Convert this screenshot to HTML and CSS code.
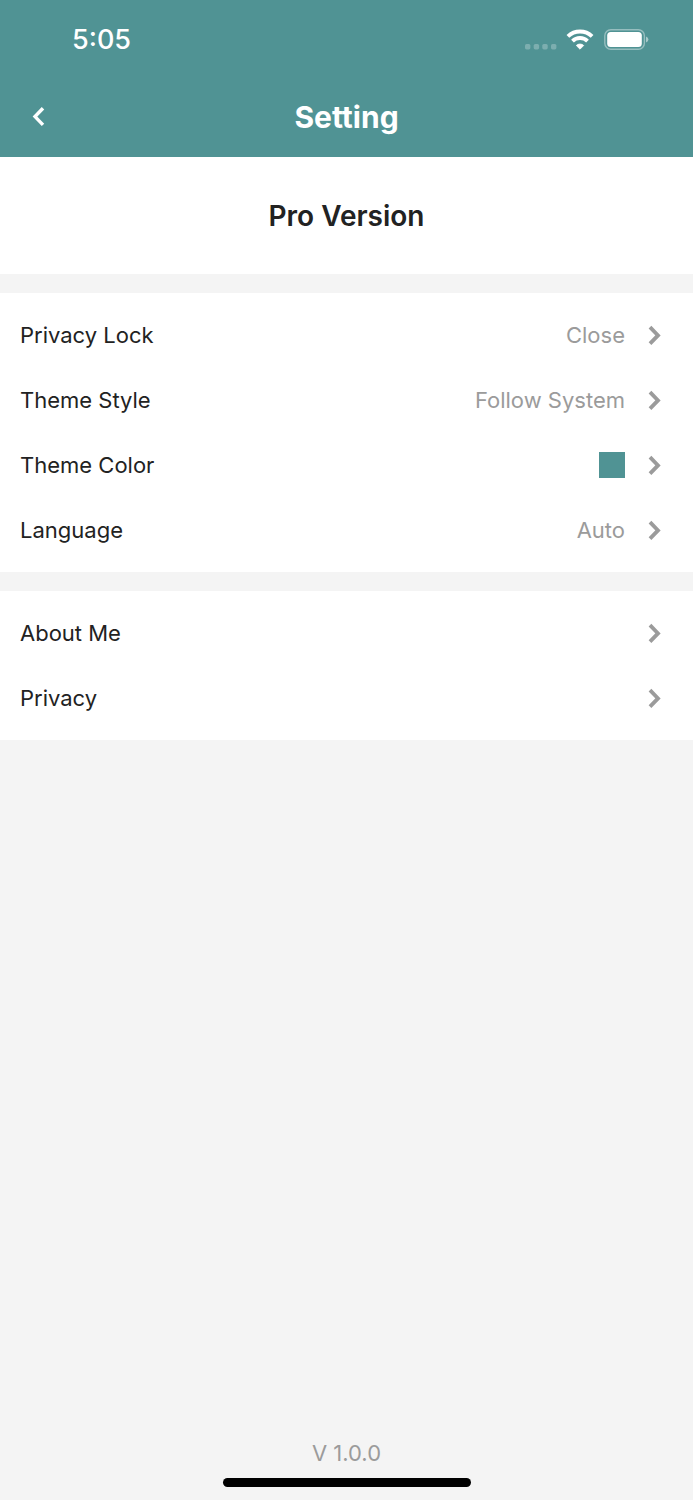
FILE: index.html
```html
<!DOCTYPE html>
<html lang="en">
<head>
    <meta charset="UTF-8">
    <meta name="viewport" content="width=device-width, initial-scale=1.0">
    <title>Setting</title>
    <link rel="stylesheet" href="styles.css">
</head>
<body>

    <!-- Shared chevron used by every row -->
    <svg class="symbols" aria-hidden="true">
        <symbol id="chevron" viewBox="0 0 14 20">
            <path d="M2 2.2 L10 10.4 L2 18.6" fill="none" stroke="currentColor" stroke-width="3.8"/>
        </symbol>
    </svg>

    <header class="header">
        <div class="status-bar">
            <span class="time">5:05</span>
            <div class="status-icons">
                <svg class="signal" width="32" height="22" viewBox="0 0 32 22" aria-hidden="true">
                    <g fill="#fff" opacity="0.25">
                        <rect x="0" y="15" width="5.4" height="5.4" rx="1.6"/>
                        <rect x="8.7" y="15" width="5.4" height="5.4" rx="1.6"/>
                        <rect x="17.3" y="15" width="5.4" height="5.4" rx="1.6"/>
                        <rect x="26" y="15" width="5.4" height="5.4" rx="1.6"/>
                    </g>
                </svg>
                <svg class="wifi" width="28" height="22" viewBox="0 0 28 22" aria-hidden="true">
                    <g fill="none" stroke="#fff" stroke-width="3.9">
                        <path d="M1.9 7.3 A17.6 17.6 0 0 1 26.1 7.3"/>
                        <path d="M6.5 12.1 A10.8 10.8 0 0 1 21.5 12.1"/>
                    </g>
                    <path d="M14 20.2 L10.3 16.5 A5.4 5.4 0 0 1 17.7 16.5 Z" fill="#fff" stroke="#fff" stroke-width="0.8" stroke-linejoin="round"/>
                </svg>
                <svg class="battery" width="45" height="22" viewBox="0 0 45 22" aria-hidden="true">
                    <rect x="0.8" y="0.7" width="39.6" height="19.6" rx="6" fill="none" stroke="#fff" stroke-width="1.4" opacity="0.4"/>
                    <rect x="3.2" y="3" width="34.6" height="15" rx="3.5" fill="#fff"/>
                    <path d="M42 7.5 Q44.4 8.5 44.4 10.5 Q44.4 12.5 42 13.5 Z" fill="#fff" opacity="0.5"/>
                </svg>
            </div>
        </div>
        <div class="nav-bar">
            <button type="button" class="back" aria-label="Back">
                <svg width="14" height="20" viewBox="0 0 14 20" aria-hidden="true">
                    <path d="M11 1.3 L3 9.6 L11 17.9" fill="none" stroke="currentColor" stroke-width="3.4"/>
                </svg>
            </button>
            <h1>Setting</h1>
        </div>
    </header>

    <main>
        <a class="pro" href="#pro">Pro Version</a>

        <nav class="group">
            <a class="row" href="#privacy-lock">
                <span class="label">Privacy Lock</span>
                <span class="value">Close</span>
                <svg class="chevron"><use href="#chevron"/></svg>
            </a>
            <a class="row" href="#theme-style">
                <span class="label">Theme Style</span>
                <span class="value">Follow System</span>
                <svg class="chevron"><use href="#chevron"/></svg>
            </a>
            <a class="row" href="#theme-color">
                <span class="label">Theme Color</span>
                <span class="swatch"></span>
                <svg class="chevron"><use href="#chevron"/></svg>
            </a>
            <a class="row" href="#language">
                <span class="label">Language</span>
                <span class="value">Auto</span>
                <svg class="chevron"><use href="#chevron"/></svg>
            </a>
        </nav>

        <nav class="group">
            <a class="row" href="#about">
                <span class="label">About Me</span>
                <svg class="chevron"><use href="#chevron"/></svg>
            </a>
            <a class="row" href="#privacy">
                <span class="label">Privacy</span>
                <svg class="chevron"><use href="#chevron"/></svg>
            </a>
        </nav>
    </main>

    <footer class="footer">
        <p class="version">V 1.0.0</p>
        <div class="home-indicator"></div>
    </footer>

</body>
</html>
```

FILE: styles.css
```css
* {
    margin: 0;
    padding: 0;
    box-sizing: border-box;
}

body {
    background: #f4f4f4;
    color: #222;
    font-family: Inter, "Liberation Sans", sans-serif;
    font-size: 22px;
    line-height: 30px;
    min-height: 100vh;
    display: flex;
    flex-direction: column;
}

a {
    color: inherit;
    text-decoration: none;
}

.symbols {
    display: none;
}

/* Header */
.header {
    background: #509394;
    color: #fff;
}

.status-bar {
    height: 80px;
    padding: 0 44px 0 72px;
    display: flex;
    justify-content: space-between;
    align-items: center;
}

.time {
    font-size: 27px;
    font-weight: 500;
}

.status-icons {
    display: flex;
    align-items: center;
}

.wifi {
    margin: 0 10px 0 9px;
}

.nav-bar {
    height: 77px;
    padding: 0 19px 3px;
    display: grid;
    grid-template-columns: 40px 1fr 40px;
    align-items: center;
}

.back {
    height: 40px;
    background: none;
    border: none;
    color: inherit;
    cursor: pointer;
    display: flex;
    align-items: center;
    justify-content: center;
}

h1 {
    font-size: 30px;
    font-weight: 700;
    text-align: center;
}

/* Sections */
main {
    flex: 1;
    display: flex;
    flex-direction: column;
    gap: 19px;
}

.pro {
    background: #fff;
    height: 117px;
    display: flex;
    align-items: center;
    justify-content: center;
    font-size: 28px;
    font-weight: 600;
}

.group {
    background: #fff;
    padding: 9px 0 10px;
}

.row {
    height: 65px;
    padding: 0 31px 0 20px;
    display: flex;
    align-items: center;
}

.label {
    flex: 1;
}

.value {
    color: #9b9b9b;
}

.swatch {
    width: 26px;
    height: 26px;
    background: #509394;
}

.chevron {
    width: 14px;
    height: 20px;
    margin-left: 23px;
    color: #9b9b9b;
}

/* Footer */
.footer {
    display: flex;
    flex-direction: column;
    align-items: center;
    gap: 10px;
    padding-bottom: 13px;
}

.version {
    color: #9b9b9b;
}

.home-indicator {
    width: 248px;
    height: 9px;
    background: #000;
    border-radius: 5px;
}
```
